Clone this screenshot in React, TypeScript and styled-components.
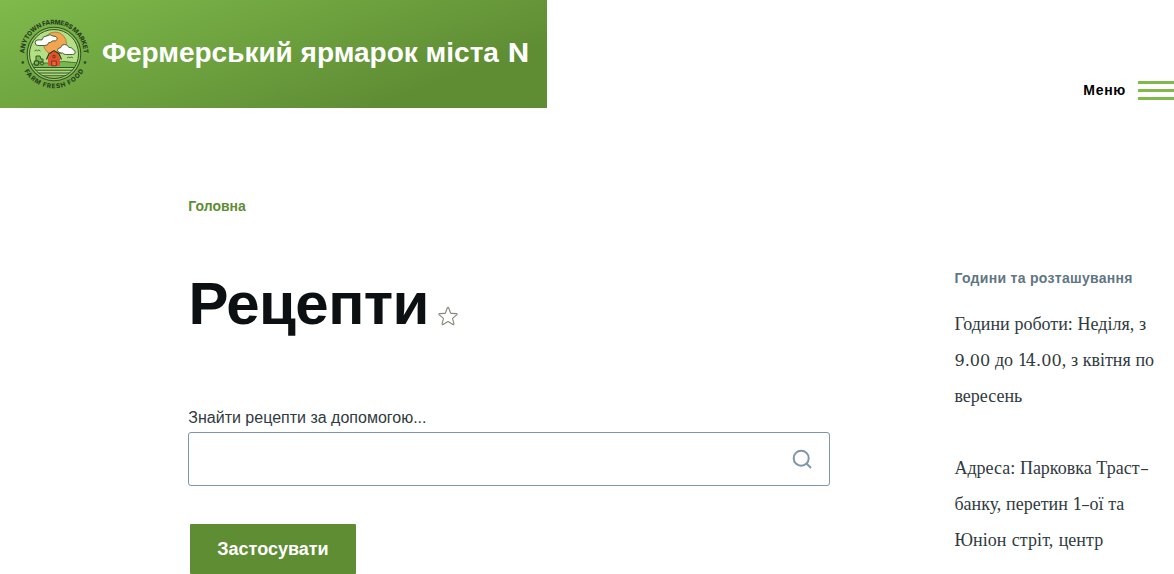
import React from "react";
import styled, { createGlobalStyle } from "styled-components";

const sans = `"Liberation Sans", Arial, sans-serif`;
const serif = `"Liberation Serif", "Times New Roman", serif`;

const GlobalStyle = createGlobalStyle`
  *, *::before, *::after { box-sizing: border-box; }
  html { overflow: hidden; }
  body { margin: 0; background: #fff; color: #313a40; font-family: ${serif}; }
`;

const Page = styled.div`
  height: 574px;
  overflow: hidden;
`;

const Header = styled.header`
  display: flex;
  justify-content: space-between;
  align-items: flex-start;
  height: 108px;
`;

const Branding = styled.a`
  display: flex;
  align-items: center;
  gap: 13px;
  width: 547px;
  height: 108px;
  padding-left: 19px;
  color: #fff;
  text-decoration: none;
  background: linear-gradient(160deg, #7fba4b 0%, #5f8d34 78.66%);
`;

const LogoImage = styled.svg`
  display: block;
  overflow: visible;
`;

const SiteName = styled.span`
  font: 700 28px/36px ${sans};
  white-space: nowrap;
  padding-bottom: 3px;
`;

const LatinInitial = styled.span`
  display: inline-block;
  margin-left: 1px;
  font-family: Inter, ${sans};
  font-size: 26px;
  line-height: 1;
  transform: scaleX(1.06);
  transform-origin: left;
`;

const MenuButton = styled.button`
  display: flex;
  align-items: center;
  gap: 12px;
  margin: 81px 0 0;
  padding: 0;
  height: 19px;
  border: 0;
  background: none;
  color: #000;
  font: 700 14px/18px ${sans};
  letter-spacing: 0.7px;
`;

const MenuLabel = styled.span`
  padding-bottom: 2px;
`;

const Bars = styled.span`
  display: flex;
  flex-direction: column;
  gap: 5px;
  width: 36px;
`;

const Bar = styled.span`
  height: 3px;
  background: #7fba4b;
`;

const Columns = styled.div`
  display: grid;
  grid-template-columns: 642px 1fr;
  column-gap: 124.4px;
  padding: 89px 0 0 188px;
`;

const Main = styled.main`
  display: flex;
  flex-direction: column;
  align-items: flex-start;
`;

const Breadcrumb = styled.a`
  padding-left: 0.3px;
  color: #5f8d34;
  font: 700 14px/18px ${sans};
  text-decoration: none;
`;

const TitleRow = styled.div`
  display: flex;
  align-items: flex-start;
  gap: 9px;
  margin-top: 53px;
`;

const Title = styled.h1`
  margin: 0;
  padding-left: 0.4px;
  color: #0d1012;
  font: 700 60px/72px ${sans};
  letter-spacing: -0.6px;
`;

const Star = styled.svg`
  display: block;
  margin-top: 38px;
`;

const Label = styled.label`
  margin-top: 66px;
  padding-left: 0.3px;
  font: 400 16px/24px ${sans};
`;

const SearchBox = styled.div`
  display: flex;
  align-items: center;
  justify-content: flex-end;
  width: 642px;
  height: 54px;
  margin-top: 2px;
  padding-right: 16px;
  border: 1px solid #7e96a7;
  border-radius: 3px;
`;

const SearchInput = styled.input`
  flex: 1;
  height: 100%;
  border: 0;
  outline: 0;
  background: none;
  font: 400 18px ${sans};
`;

const Submit = styled.button`
  width: 166px;
  height: 50px;
  margin: 38px 0 0 2px;
  padding: 0;
  border: 0;
  border-radius: 1px;
  background: #5f8d34;
  color: #fff;
  font: 700 18px/20px ${sans};
`;

const Sidebar = styled.aside`
  padding-top: 72px;
`;

const BlockTitle = styled.h2`
  margin: 0 0 19px;
  color: #5f7683;
  font: 700 14px/18px ${sans};
  letter-spacing: 0.3px;
  white-space: nowrap;
`;

const Text = styled.p`
  margin: 0 0 36px;
  font: 400 18px/36px ${serif};
  word-spacing: 0.2px;
  white-space: nowrap;
`;

const Spaced = styled.span`
  word-spacing: 0.8px;
  letter-spacing: 0.06px;
`;

const Figures = styled.span<{ $tight?: boolean }>`
  font-family: "DejaVu Serif", ${serif};
  font-size: 16.1px;
  line-height: 1;
  letter-spacing: ${(p) => (p.$tight ? "-2.2px" : "0")};
`;

const Hyphen = styled.span`
  display: inline-block;
  width: 9px;
  line-height: 1;
  text-align: center;
  transform: translateY(-0.5px) scale(1.5, 0.85);
`;

function Logo() {
  return (
    <LogoImage width="70" height="70" viewBox="0 0 70 70" aria-hidden="true">
      <defs>
        <path id="ringTop" d="M5.300 35a29.700 29.700 0 0 1 59.400 0" />
        <path id="ringBottom" d="M.8 35a34.200 34.200 0 0 0 68.400 0" />
        <clipPath id="scene"><circle cx="35" cy="35" r="24.500" /></clipPath>
      </defs>
      <circle cx="35" cy="35" r="26.800" fill="#8fc65c" stroke="#35552a" strokeWidth="1.100" />
      <g clipPath="url(#scene)">
        <rect width="70" height="70" fill="#b4df85" />
        <circle cx="36" cy="24.500" r="11.500" fill="#f3a451" stroke="#8a6a32" strokeWidth=".6" />
        <path d="M9 48V46q9-3 21-2 15-3 30 0v8z" fill="#79b84d" stroke="#35552a" strokeWidth=".7" />
        <rect x="8" y="48" width="54" height="16" fill="#a9d977" />
        <path d="M8 48.500h54M8 51.200h54M8 54h54M8 56.800h54M8 59.300h54" stroke="#35552a" strokeWidth="1" />
      </g>
      <circle cx="35" cy="35" r="24.500" fill="none" stroke="#35552a" strokeWidth="1" />
      <path d="M19 26.500a2.800 2.800 0 0 1 0-5.600h4q.5-4 5-4 3-2.500 6 .2 4.500 0 4.200 3.200-.5 2-5 1.700-1 1.800-3.500 1.600-.5 3-4 2.900z" fill="#fff" stroke="#35552a" strokeWidth=".9" />
      <path d="M42 34q-3.500-.5-3.500-2.700 0-2.500 3.200-2.600.5-3.400 4-3.200 3.500.2 4 2.800 4 0 4.500 2.500 2 .2 2 2.400 0 2.300-2.500 2.300h-7q-2 0-3-1.500z" fill="#fff" stroke="#35552a" strokeWidth=".9" />
      <path d="M15.500 32q2-2 3 0 1-2 3 0M48 39q2-2 3 0 1-2 3 0" fill="none" stroke="#35552a" strokeWidth=".8" />
      <path d="M17 43v-6h4l1 3h2v3z" fill="#79b84d" stroke="#35552a" strokeWidth="1" />
      <circle cx="17.500" cy="44" r="2.300" fill="#79b84d" stroke="#35552a" strokeWidth="1.200" />
      <circle cx="23" cy="44.500" r="1.600" fill="#79b84d" stroke="#35552a" strokeWidth="1" />
      <path d="M29 46.800v-7.500l2-4.500 4-2.300 4 2.300 2 4.500v7.500z" fill="#e3502b" />
      <path d="M27.500 40.500l2.600-5.800L35 31.800l4.900 2.900 2.600 5.800" fill="none" stroke="#3b3a22" strokeWidth="1.300" />
      <path d="M32.700 46.800v-4.700h4.600v4.700zM34 36.500h2v2.200h-2z" fill="#f1643b" stroke="#5b2c1b" strokeWidth=".8" />
      <circle cx="3.800" cy="43.500" r="1.400" fill="#35552a" />
      <circle cx="66" cy="43.500" r="1.400" fill="#35552a" />
      <g fill="#28441f" fontFamily="Inter, Liberation Sans, sans-serif" fontWeight="800" fontSize="6.400" textAnchor="middle">
        <text><textPath href="#ringTop" startOffset="50%" textLength="92">ANYTOWN FARMERS MARKET</textPath></text>
        <text><textPath href="#ringBottom" startOffset="50%" textLength="72">FARM FRESH FOOD</textPath></text>
      </g>
    </LogoImage>
  );
}

export default function App() {
  return (
    <Page>
      <GlobalStyle />
      <Header>
        <Branding>
          <Logo />
          <SiteName>Фермерський ярмарок міста <LatinInitial>N</LatinInitial></SiteName>
        </Branding>
        <MenuButton>
          <MenuLabel>Меню</MenuLabel>
          <Bars><Bar /><Bar /><Bar /></Bars>
        </MenuButton>
      </Header>
      <Columns>
        <Main>
          <Breadcrumb>Головна</Breadcrumb>
          <TitleRow>
            <Title>Рецепти</Title>
            <Star width="20" height="20" viewBox="0 0 20 20">
              <path d="M9.300 2q.7-1.200 1.400 0l1.900 5q.2.400.7.400l5 .2q1.300.2.400 1.200l-3.900 3.300q-.3.300-.2.800l1.300 4.800q.1 1.300-1 .8L10.500 15.700q-.5-.3-1 0l-4.400 2.800q-1.100.5-1-.8l1.300-4.800q.1-.5-.2-.8L1.300 8.800q-.9-1 .4-1.200l5-.2q.5 0 .7-.4z" fill="#fff" stroke="#85857a" strokeWidth="1.100" strokeLinejoin="round" />
            </Star>
          </TitleRow>
          <Label htmlFor="search">Знайти рецепти за допомогою...</Label>
          <SearchBox>
            <SearchInput id="search" />
            <svg width="22" height="22" viewBox="0 0 22 22" fill="none" stroke="#7e96a7" strokeWidth="2">
              <circle cx="10.200" cy="10.200" r="7.500" />
              <path d="M15.500 15.500l4.500 4.500" />
            </svg>
          </SearchBox>
          <Submit>Застосувати</Submit>
        </Main>
        <Sidebar>
          <BlockTitle>Години та розташування</BlockTitle>
          <Text>
            Години роботи: Неділя, з<br />
            <Figures>9.00</Figures> до <Figures $tight>1</Figures><Figures>4.00</Figures>, з квітня по<br />
            вересень
          </Text>
          <Text>
            Адреса: Парковка Траст<Hyphen>-</Hyphen><br />
            банку, перетин <Figures $tight>1</Figures><Hyphen>-</Hyphen>ої та<br />
            <Spaced>Юніон стріт, центр</Spaced>
          </Text>
        </Sidebar>
      </Columns>
    </Page>
  );
}
